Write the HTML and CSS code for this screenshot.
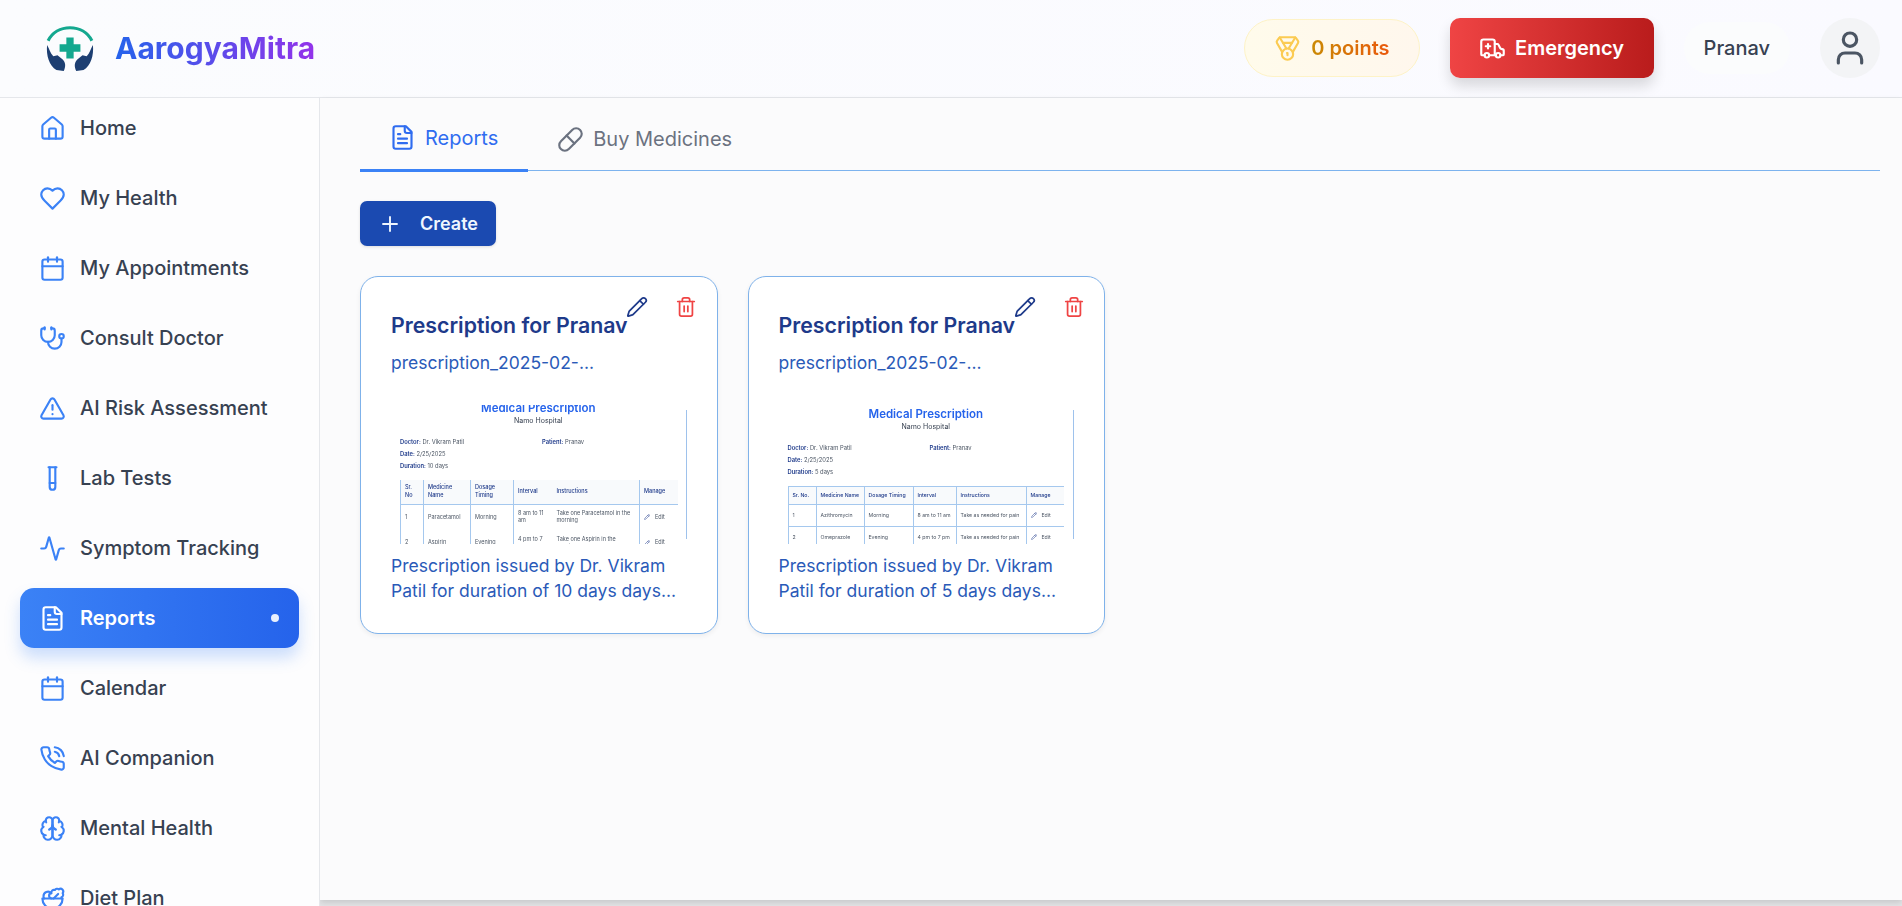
FILE: index.html
```html
<!DOCTYPE html>
<html lang="en">

<head>
  <meta charset="UTF-8" />
  <meta name="viewport" content="width=device-width, initial-scale=1" />
  <title>AarogyaMitra</title>
  <link rel="stylesheet" href="styles.css">
</head>

<body>

  <!-- Icon sprite -->
  <svg class="sprite" xmlns="http://www.w3.org/2000/svg">
    <symbol id="i-home" viewBox="0 0 24 24"><path d="M15 21v-8a1 1 0 0 0-1-1h-4a1 1 0 0 0-1 1v8"/><path d="M3 10a2 2 0 0 1 .709-1.528l7-5.999a2 2 0 0 1 2.582 0l7 5.999A2 2 0 0 1 21 10v9a2 2 0 0 1-2 2H5a2 2 0 0 1-2-2z"/></symbol>
    <symbol id="i-heart" viewBox="0 0 24 24"><path d="M19 14c1.49-1.46 3-3.21 3-5.5A5.5 5.5 0 0 0 16.5 3c-1.76 0-3 .5-4.5 2-1.5-1.5-2.74-2-4.5-2A5.5 5.5 0 0 0 2 8.5c0 2.3 1.5 4.05 3 5.5l7 7Z"/></symbol>
    <symbol id="i-calendar" viewBox="0 0 24 24"><path d="M8 2v4"/><path d="M16 2v4"/><rect width="18" height="18" x="3" y="4" rx="2"/><path d="M3 10h18"/></symbol>
    <symbol id="i-stethoscope" viewBox="0 0 24 24"><path d="M11 2v2"/><path d="M5 2v2"/><path d="M5 3H4a2 2 0 0 0-2 2v4a6 6 0 0 0 12 0V5a2 2 0 0 0-2-2h-1"/><path d="M8 15a6 6 0 0 0 12 0v-3"/><circle cx="20" cy="10" r="2"/></symbol>
    <symbol id="i-alert" viewBox="0 0 24 24"><path d="m21.73 18-8-14a2 2 0 0 0-3.48 0l-8 14A2 2 0 0 0 4 21h16a2 2 0 0 0 1.73-3"/><path d="M12 9v4"/><path d="M12 17h.01"/></symbol>
    <symbol id="i-tube" viewBox="0 0 24 24"><path d="M14.5 2v17.5c0 1.4-1.1 2.5-2.5 2.5c-1.4 0-2.5-1.1-2.5-2.5V2"/><path d="M8.5 2h7"/><path d="M14.5 16h-5"/></symbol>
    <symbol id="i-activity" viewBox="0 0 24 24"><path d="M22 12h-2.48a2 2 0 0 0-1.93 1.46l-2.35 8.36a.25.25 0 0 1-.48 0L9.24 2.18a.25.25 0 0 0-.48 0l-2.35 8.36A2 2 0 0 1 4.49 12H2"/></symbol>
    <symbol id="i-file" viewBox="0 0 24 24"><path d="M15 2H6a2 2 0 0 0-2 2v16a2 2 0 0 0 2 2h12a2 2 0 0 0 2-2V7Z"/><path d="M14 2v4a2 2 0 0 0 2 2h4"/><path d="M10 9H8"/><path d="M16 13H8"/><path d="M16 17H8"/></symbol>
    <symbol id="i-phone" viewBox="0 0 24 24"><path d="M22 16.92v3a2 2 0 0 1-2.18 2 19.79 19.79 0 0 1-8.63-3.07 19.5 19.5 0 0 1-6-6 19.79 19.79 0 0 1-3.07-8.67A2 2 0 0 1 4.11 2h3a2 2 0 0 1 2 1.72 12.84 12.84 0 0 0 .7 2.81 2 2 0 0 1-.45 2.11L8.09 9.91a16 16 0 0 0 6 6l1.27-1.27a2 2 0 0 1 2.11-.45 12.84 12.84 0 0 0 2.81.7A2 2 0 0 1 22 16.92z"/><path d="M14.05 2a9 9 0 0 1 8 7.94"/><path d="M14.05 6A5 5 0 0 1 18 10"/></symbol>
    <symbol id="i-brain" viewBox="0 0 24 24"><path d="M12 5a3 3 0 1 0-5.997.125 4 4 0 0 0-2.526 5.77 4 4 0 0 0 .556 6.588A4 4 0 1 0 12 18Z"/><path d="M12 5a3 3 0 1 1 5.997.125 4 4 0 0 1 2.526 5.77 4 4 0 0 1-.556 6.588A4 4 0 1 1 12 18Z"/><path d="M15 13a4.5 4.5 0 0 1-3-4 4.5 4.5 0 0 1-3 4"/><path d="M17.599 6.5a3 3 0 0 0 .399-1.375"/><path d="M6.003 5.125A3 3 0 0 0 6.401 6.5"/><path d="M3.477 10.896a4 4 0 0 1 .585-.396"/><path d="M19.938 10.5a4 4 0 0 1 .585.396"/><path d="M6 18a4 4 0 0 1-1.967-.516"/><path d="M19.967 17.484A4 4 0 0 1 18 18"/></symbol>
    <symbol id="i-salad" viewBox="0 0 24 24"><path d="M7 21h10"/><path d="M12 21a9 9 0 0 0 9-9H3a9 9 0 0 0 9 9Z"/><path d="M11.38 12a2.4 2.4 0 0 1-.4-4.77 2.4 2.4 0 0 1 3.2-2.77 2.4 2.4 0 0 1 3.47-.63 2.4 2.4 0 0 1 3.37 3.37 2.4 2.4 0 0 1-1.1 3.7 2.51 2.51 0 0 1 .03 1.1"/><path d="m13 12 4-4"/><path d="M10.9 7.25A3.99 3.99 0 0 0 4 10c0 .73.2 1.41.54 2"/></symbol>
    <symbol id="i-medal" viewBox="0 0 24 24"><path d="M7.21 15 2.66 7.14a2 2 0 0 1 .13-2.2L4.4 2.8A2 2 0 0 1 6 2h12a2 2 0 0 1 1.6.8l1.6 2.14a2 2 0 0 1 .14 2.2L16.79 15"/><path d="M11 12 5.12 2.2"/><path d="m13 12 5.88-9.8"/><path d="M8 7h8"/><circle cx="12" cy="17" r="5"/><path d="M12 18v-2h-.5"/></symbol>
    <symbol id="i-ambulance" viewBox="0 0 24 24"><path d="M10 10H6"/><path d="M14 18V6a2 2 0 0 0-2-2H4a2 2 0 0 0-2 2v11a1 1 0 0 0 1 1h2"/><path d="M19 18h2a1 1 0 0 0 1-1v-3.28a1 1 0 0 0-.684-.948l-1.923-.641a1 1 0 0 1-.578-.502l-1.539-3.076A1 1 0 0 0 16.382 8H14"/><path d="M8 8v4"/><path d="M9 18h6"/><circle cx="17" cy="18" r="2"/><circle cx="7" cy="18" r="2"/></symbol>
    <symbol id="i-user" viewBox="0 0 24 24"><path d="M19 21v-2a4 4 0 0 0-4-4H9a4 4 0 0 0-4 4v2"/><circle cx="12" cy="7" r="4"/></symbol>
    <symbol id="i-pill" viewBox="0 0 24 24"><path d="m10.5 20.5 10-10a4.95 4.95 0 1 0-7-7l-10 10a4.95 4.95 0 1 0 7 7Z"/><path d="m8.5 8.5 7 7"/></symbol>
    <symbol id="i-plus" viewBox="0 0 24 24"><path d="M5 12h14"/><path d="M12 5v14"/></symbol>
    <symbol id="i-pencil" viewBox="0 0 24 24"><path d="M21.174 6.812a1 1 0 0 0-3.986-3.987L3.842 16.174a2 2 0 0 0-.5.83l-1.321 4.352a.5.5 0 0 0 .623.622l4.353-1.32a2 2 0 0 0 .83-.497z"/><path d="m15 5 4 4"/></symbol>
    <symbol id="i-trash" viewBox="0 0 24 24"><path d="M3 6h18"/><path d="M19 6v14c0 1-1 2-2 2H7c-1 0-2-1-2-2V6"/><path d="M8 6V4c0-1 1-2 2-2h4c1 0 2 1 2 2v2"/><path d="M10 11v6"/><path d="M14 11v6"/></symbol>
  </svg>

  <header class="topbar">
    <div class="brand">
      <svg class="logo" viewBox="0 0 48 48" xmlns="http://www.w3.org/2000/svg">
        <path class="logo-arc" d="M3 17C7 9 15 4.500 24 4.500S41 9 45 17"/>
        <path class="logo-cross" d="M20.500 14h7v6.500h6.500v7h-6.500v6.500h-7v-6.500H14v-7h6.500z"/>
        <path class="logo-hand" d="M2 21C1 31 4 41 11 45l7 1c2-4 2-8-1-11l-5-4-4 1C5 29 4 24 2 21Z"/>
        <path class="logo-hand" d="M46 21C47 31 44 41 37 45l-7 1c-2-4-2-8 1-11l5-4 4 1c3-3 4-8 6-11Z"/>
      </svg>
      <span class="brand-name">AarogyaMitra</span>
    </div>

    <div class="topbar-actions">
      <div class="points">
        <svg class="icon icon-medal"><use href="#i-medal"/></svg>
        <span class="points-text">0 points</span>
      </div>
      <button class="emergency">
        <svg class="icon"><use href="#i-ambulance"/></svg>
        Emergency
      </button>
      <div class="username">Pranav</div>
      <div class="avatar"><svg class="icon"><use href="#i-user"/></svg></div>
    </div>
  </header>

  <div class="layout">
    <nav class="sidebar">
      <a class="nav-item"><svg class="icon"><use href="#i-home"/></svg>Home</a>
      <a class="nav-item"><svg class="icon"><use href="#i-heart"/></svg>My Health</a>
      <a class="nav-item"><svg class="icon"><use href="#i-calendar"/></svg>My Appointments</a>
      <a class="nav-item"><svg class="icon"><use href="#i-stethoscope"/></svg>Consult Doctor</a>
      <a class="nav-item"><svg class="icon"><use href="#i-alert"/></svg>AI Risk Assessment</a>
      <a class="nav-item"><svg class="icon"><use href="#i-tube"/></svg>Lab Tests</a>
      <a class="nav-item"><svg class="icon"><use href="#i-activity"/></svg>Symptom Tracking</a>
      <a class="nav-item active"><svg class="icon"><use href="#i-file"/></svg>Reports<span class="nav-dot"></span></a>
      <a class="nav-item"><svg class="icon"><use href="#i-calendar"/></svg>Calendar</a>
      <a class="nav-item"><svg class="icon"><use href="#i-phone"/></svg>AI Companion</a>
      <a class="nav-item"><svg class="icon"><use href="#i-brain"/></svg>Mental Health</a>
      <a class="nav-item"><svg class="icon"><use href="#i-salad"/></svg>Diet Plan</a>
    </nav>

    <main class="content">
      <div class="tabs">
        <a class="tab active"><svg class="icon"><use href="#i-file"/></svg>Reports</a>
        <a class="tab"><svg class="icon"><use href="#i-pill"/></svg>Buy Medicines</a>
      </div>

      <button class="create-btn"><svg class="icon"><use href="#i-plus"/></svg>Create</button>

      <div class="card-grid">
        <!-- Report 1 -->
        <article class="card">
          <svg class="icon card-edit"><use href="#i-pencil"/></svg>
          <svg class="icon card-delete"><use href="#i-trash"/></svg>
          <h3>Prescription for Pranav</h3>
          <p class="card-file">prescription_2025-02-...</p>
          <div class="preview">
            <div class="doc doc-scrolled">
              <div class="doc-title">Medical Prescription</div>
              <div class="doc-hospital">Namo Hospital</div>
              <div class="doc-meta">
                <div><b>Doctor:</b> Dr. Vikram Patil</div>
                <div><b>Patient:</b> Pranav</div>
                <div><b>Date:</b> 2/25/2025</div>
                <div></div>
                <div><b>Duration:</b> 10 days</div>
              </div>
              <table class="rx rx-narrow">
                <colgroup><col class="c-sr"><col class="c-name"><col class="c-dose"><col class="c-int"><col class="c-ins"><col class="c-man"></colgroup>
                <tr><th>Sr. No</th><th>Medicine Name</th><th>Dosage Timing</th><th>Interval</th><th>Instructions</th><th>Manage</th></tr>
                <tr><td>1</td><td>Paracetamol</td><td>Morning</td><td>8 am to 11 am</td><td>Take one Paracetamol in the morning</td><td class="rx-edit"><svg class="icon"><use href="#i-pencil"/></svg>Edit</td></tr>
                <tr><td>2</td><td>Aspirin</td><td>Evening</td><td>4 pm to 7 pm</td><td>Take one Aspirin in the evening</td><td class="rx-edit"><svg class="icon"><use href="#i-pencil"/></svg>Edit</td></tr>
              </table>
            </div>
            <div class="preview-rule"></div>
          </div>
          <p class="card-desc">Prescription issued by Dr. Vikram Patil for duration of 10 days days...</p>
        </article>

        <!-- Report 2 -->
        <article class="card">
          <svg class="icon card-edit"><use href="#i-pencil"/></svg>
          <svg class="icon card-delete"><use href="#i-trash"/></svg>
          <h3>Prescription for Pranav</h3>
          <p class="card-file">prescription_2025-02-...</p>
          <div class="preview">
            <div class="doc">
              <div class="doc-title">Medical Prescription</div>
              <div class="doc-hospital">Namo Hospital</div>
              <div class="doc-meta">
                <div><b>Doctor:</b> Dr. Vikram Patil</div>
                <div><b>Patient:</b> Pranav</div>
                <div><b>Date:</b> 2/25/2025</div>
                <div></div>
                <div><b>Duration:</b> 5 days</div>
              </div>
              <table class="rx rx-wide">
                <colgroup><col class="c-sr"><col class="c-name"><col class="c-dose"><col class="c-int"><col class="c-ins"><col class="c-man"></colgroup>
                <tr><th>Sr. No.</th><th>Medicine Name</th><th>Dosage Timing</th><th>Interval</th><th>Instructions</th><th>Manage</th></tr>
                <tr><td>1</td><td>Azithromycin</td><td>Morning</td><td>8 am to 11 am</td><td>Take as needed for pain</td><td class="rx-edit"><svg class="icon"><use href="#i-pencil"/></svg>Edit</td></tr>
                <tr><td>2</td><td>Omeprazole</td><td>Evening</td><td>4 pm to 7 pm</td><td>Take as needed for pain</td><td class="rx-edit"><svg class="icon"><use href="#i-pencil"/></svg>Edit</td></tr>
              </table>
            </div>
            <div class="preview-rule"></div>
          </div>
          <p class="card-desc">Prescription issued by Dr. Vikram Patil for duration of 5 days days...</p>
        </article>
      </div>
    </main>
  </div>

</body>

</html>
```
FILE: styles.css
```css
* {
  box-sizing: border-box;
}

body {
  margin: 0;
  height: 906px;
  overflow: hidden;
  background-color: #e4e5e7;
  color: #374151;
  font-family: Inter, 'Noto Sans', sans-serif;
}

h3,
p {
  margin: 0;
}

.sprite {
  display: none;
}

.icon {
  display: block;
  flex: none;
  width: 27px;
  height: 27px;
  fill: none;
  stroke: currentColor;
  stroke-width: 1.9;
  stroke-linecap: round;
  stroke-linejoin: round;
}

/* Top bar */
.topbar {
  display: flex;
  align-items: center;
  justify-content: space-between;
  height: 98px;
  padding: 0 22px 1px 45px;
  background: linear-gradient(90deg, #fbfcfe, #fafaff);
  border-bottom: 1px solid #e5e7eb;
}

.brand {
  display: flex;
  align-items: center;
  gap: 20px;
}

.logo {
  width: 50px;
  height: 50px;
}

.logo-arc {
  fill: none;
  stroke: #14a88f;
  stroke-width: 3;
}

.logo-cross {
  fill: #14a88f;
}

.logo-hand {
  fill: #1d3f72;
}

.brand-name {
  font-size: 30px;
  font-weight: 700;
  background: linear-gradient(90deg, #2563eb, #9333ea);
  -webkit-background-clip: text;
  background-clip: text;
  color: transparent;
}

.topbar-actions {
  display: flex;
  align-items: center;
  gap: 30px;
}

.points {
  display: flex;
  align-items: center;
  gap: 10px;
  height: 58px;
  padding: 0 29px;
  border: 1px solid #fef3c7;
  border-radius: 29px;
  background: linear-gradient(90deg, #fffbeb, #fff7ed);
}

.icon-medal {
  color: #fbcb52;
}

.points-text {
  font-size: 20px;
  font-weight: 600;
  background: linear-gradient(90deg, #ca8a04, #ea580c);
  -webkit-background-clip: text;
  background-clip: text;
  color: transparent;
}

.emergency {
  display: flex;
  align-items: center;
  gap: 9px;
  height: 60px;
  padding: 0 29.500px;
  border: none;
  border-radius: 10px;
  background: linear-gradient(90deg, #ef4444, #b91c1c);
  box-shadow: 0 8px 14px rgba(0, 0, 0, 0.14);
  color: #fff;
  font-family: inherit;
  font-size: 20px;
  font-weight: 600;
}

.username {
  height: 52px;
  padding: 0 20px;
  border-radius: 26px;
  background-color: #fbfcfd;
  font-size: 20px;
  font-weight: 500;
  line-height: 52px;
}

.avatar {
  display: flex;
  align-items: center;
  justify-content: center;
  width: 60px;
  height: 60px;
  border-radius: 50%;
  background-color: #f3f4f6;
  color: #4b5563;
}

.avatar .icon {
  width: 40px;
  height: 40px;
}

/* Sidebar */
.layout {
  display: flex;
  align-items: flex-start;
}

.sidebar {
  flex: none;
  position: relative;
  z-index: 1;
  width: 320px;
  height: 808px;
  overflow: hidden;
  padding: 0 20px;
  background-color: #fdfdfe;
  border-right: 1px solid #e5e7eb;
}

.nav-item {
  display: flex;
  align-items: center;
  gap: 14px;
  height: 60px;
  margin-bottom: 10px;
  padding: 0 20px 0 19px;
  border-radius: 14px;
  color: #374151;
  font-size: 20px;
  font-weight: 500;
}

.nav-item .icon {
  color: #3b82f6;
}

.nav-item.active {
  background: linear-gradient(90deg, #3b82f6, #2563eb);
  box-shadow: 0 10px 15px rgba(59, 130, 246, 0.25);
  color: #fff;
  font-weight: 600;
}

.nav-item.active .icon {
  color: #fff;
}

.nav-dot {
  width: 8px;
  height: 8px;
  margin-left: auto;
  border-radius: 50%;
  background-color: #fff;
  opacity: 0.9;
}

/* Main content */
.content {
  flex: 1;
  min-width: 0;
  height: 802px;
  padding: 0 22px 0 40px;
  background-color: #fbfbfc;
  box-shadow: 0 3px 6px rgba(0, 0, 0, 0.12);
}

.tabs {
  display: flex;
  height: 73px;
  border-bottom: 1px solid #7db3ee;
}

.tab {
  display: flex;
  align-items: center;
  gap: 9px;
  height: 74px;
  padding: 8px 30px 0 29px;
  color: #6b7280;
  font-size: 20px;
}

.tab.active {
  border-bottom: 3px solid #3b82f6;
  color: #2f6cf0;
}

.create-btn {
  display: flex;
  align-items: center;
  gap: 18px;
  height: 45px;
  margin-top: 30px;
  padding: 0 18px;
  border: none;
  border-radius: 7px;
  background-color: #1b4ab1;
  box-shadow: 0 1px 3px rgba(0, 0, 0, 0.12);
  color: #eff6ff;
  font-family: inherit;
  font-size: 18px;
  font-weight: 600;
}

.create-btn .icon {
  width: 24px;
  height: 24px;
}

.card-grid {
  display: grid;
  grid-template-columns: repeat(4, minmax(0, 1fr));
  gap: 30px;
  margin-top: 30px;
}

.card {
  position: relative;
  aspect-ratio: 1;
  padding: 31px 30px 24px;
  border: 1px solid #7fb2ea;
  border-radius: 18px;
  background-color: #fff;
  box-shadow: 0 2px 5px rgba(0, 0, 0, 0.06);
}

.card h3 {
  color: #1e3a8a;
  font-size: 21.300px;
  font-weight: 600;
  line-height: 34px;
  white-space: nowrap;
}

.card-edit {
  position: absolute;
  top: 19px;
  left: 265px;
  width: 22px;
  height: 22px;
  color: #1e3a8a;
}

.card-delete {
  position: absolute;
  top: 19px;
  left: 314px;
  width: 22px;
  height: 22px;
  color: #ef4444;
}

.card-file,
.card-desc {
  color: #2a5ab8;
  font-size: 17.500px;
}

.card-file {
  margin-top: 8px;
  line-height: 26px;
}

.card-desc {
  margin-top: 9px;
  line-height: 25px;
}

/* Prescription thumbnail */
.preview {
  display: flex;
  height: 139px;
  margin-top: 29px;
  overflow: hidden;
  background-color: #fff;
}

.doc {
  flex: 1;
  min-width: 0;
  padding: 2px 9px 0;
  color: #4b5563;
  font-size: 5.800px;
  filter: blur(0.4px);
}

.doc-scrolled {
  margin-top: -6px;
}

.preview-rule {
  flex: none;
  width: 1px;
  margin: 5px 0;
  background-color: #9ec2ec;
}

.doc-title {
  color: #2563eb;
  font-size: 11.500px;
  font-weight: 600;
  line-height: 14px;
  text-align: center;
}

.doc-hospital {
  color: #374151;
  font-size: 7px;
  line-height: 12px;
  text-align: center;
}

.doc-meta {
  display: grid;
  grid-template-columns: 142px 1fr;
  margin-top: 9px;
  line-height: 12px;
}

.doc-meta b {
  color: #1e3a8a;
  font-weight: 600;
}

.rx {
  width: 100%;
  margin-top: 8px;
  border-collapse: collapse;
  table-layout: fixed;
  font-size: 5.500px;
  line-height: 7.500px;
}

.rx th,
.rx td {
  padding: 0 4px;
  border-left: 1px solid #a5c8ee;
  border-bottom: 1px solid #a5c8ee;
  text-align: left;
}

.rx th {
  background-color: #f8fafc;
  color: #1e3a8a;
  font-weight: 500;
}

.rx-edit {
  white-space: nowrap;
}

.rx-edit .icon {
  display: inline-block;
  width: 6px;
  height: 6px;
  margin-right: 5px;
  color: #1e3a8a;
  vertical-align: middle;
}

.rx-narrow tr:first-child {
  height: 24px;
}

.rx-narrow tr {
  height: 26px;
}

.rx-narrow td {
  border-bottom: none;
}

.rx-narrow .c-sr { width: 23px; }
.rx-narrow .c-name { width: 47px; }
.rx-narrow .c-dose { width: 43px; }
.rx-narrow .c-int { width: 39px; }
.rx-narrow .c-ins { width: 87px; }
.rx-narrow .c-man { width: 38px; }

.rx-narrow th:nth-child(5),
.rx-narrow td:nth-child(5) {
  border-left: none;
}

.rx-wide {
  border-top: 1px solid #a5c8ee;
  font-size: 5.200px;
}

.rx-wide th,
.rx-wide td {
  padding: 0 3px 0 4px;
  white-space: nowrap;
}

.rx-wide tr:first-child {
  height: 18px;
}

.rx-wide tr {
  height: 22px;
}

.rx-wide .c-sr { width: 28px; }
.rx-wide .c-name { width: 48px; }
.rx-wide .c-dose { width: 49px; }
.rx-wide .c-int { width: 43px; }
.rx-wide .c-ins { width: 70px; }
.rx-wide .c-man { width: 38px; }
```
